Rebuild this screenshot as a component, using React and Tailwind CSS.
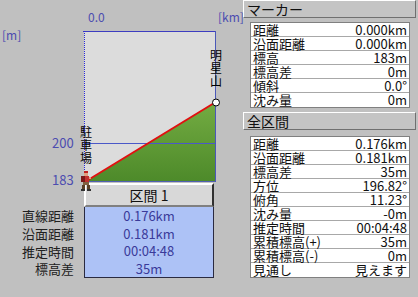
import React from 'react';

const MARKER_ROWS = [
    ['距離', '0.000km'],
    ['沿面距離', '0.000km'],
    ['標高', '183m'],
    ['標高差', '0m'],
    ['傾斜', '0.0°'],
    ['沈み量', '0m'],
];

const TOTAL_ROWS = [
    ['距離', '0.176km'],
    ['沿面距離', '0.181km'],
    ['標高差', '35m'],
    ['方位', '196.82°'],
    ['俯角', '11.23°'],
    ['沈み量', '-0m'],
    ['推定時間', '00:04:48'],
    ['累積標高(+)', '35m'],
    ['累積標高(-)', '0m'],
    ['見通し', '見えます'],
];

const SECTION_ROWS = [
    ['直線距離', '0.176km'],
    ['沿面距離', '0.181km'],
    ['推定時間', '00:04:48'],
    ['標高差', '35m'],
];

function PanelHeader({ title }) {
    return (
        <div className="h-[18px] ml-[1px] mr-[2px] bg-[#c4c4c4] border border-t-white border-l-white border-r-[#707070] border-b-[#707070] pl-[3px] text-[14px] leading-[16px] text-[#101010]">
            {title}
        </div>
    );
}

function InfoTable({ rows }) {
    return (
        <div className="ml-[8px] w-[160px] bg-white border border-[#808080] flex flex-col divide-y divide-[#a8a8a8]">
            {rows.map(([label, value]) => (
                <div key={label} className="h-[14px] flex items-center justify-between px-[2px] text-[13px] leading-[14px] text-[#101010]">
                    <span>{label}</span>
                    <span>{value}</span>
                </div>
            ))}
        </div>
    );
}

function VerticalLabel({ chars, className }) {
    return (
        <div className={`absolute flex flex-col text-[12px] leading-[13px] text-black ${className}`}>
            {chars.map(c => (
                <span key={c} className="h-[13px]">{c}</span>
            ))}
        </div>
    );
}

function Hiker() {
    return (
        <svg width="14" height="20" viewBox="0 0 14 20" className="absolute left-[79px] top-[171px] z-10">
            <rect x="5" y="0" width="4" height="2" fill="#c02020" />
            <rect x="5" y="2" width="4" height="3" fill="#e0a080" />
            <rect x="2" y="5" width="5" height="6" fill="#7a1818" />
            <rect x="6" y="5" width="4" height="6" fill="#c03030" />
            <rect x="10" y="6" width="2" height="2" fill="#e0a080" />
            <rect x="4" y="11" width="6" height="3" fill="#806040" />
            <rect x="3" y="14" width="3" height="4" fill="#5a4028" />
            <rect x="8" y="14" width="3" height="4" fill="#5a4028" />
            <rect x="2" y="18" width="4" height="2" fill="#303030" />
            <rect x="8" y="18" width="4" height="2" fill="#303030" />
        </svg>
    );
}

export default function App() {
    return (
        <div className="w-[418px] h-[297px] bg-[#c0c0c0] flex overflow-hidden font-['Noto_Sans_CJK_JP','Noto_Sans',sans-serif]">
            {/* Profile chart */}
            <div className="w-[242px] relative">
                <div className="relative h-[183px]">
                    <svg width="242" height="183" className="absolute left-0 top-0">
                        <defs>
                            <linearGradient id="slope" x1="0" y1="0" x2="0" y2="1">
                                <stop offset="0" stopColor="#74ac42" />
                                <stop offset="1" stopColor="#4d8a2a" />
                            </linearGradient>
                        </defs>
                        <rect x="84" y="31" width="132" height="151" fill="#dcdcdc" />
                        <polygon points="87,181 216,102 216,181" fill="url(#slope)" />
                        <line x1="84" y1="143.5" x2="216" y2="143.5" stroke="#4a58c8" strokeWidth="1" />
                        <line x1="84" y1="181.5" x2="216" y2="181.5" stroke="#5060b0" strokeWidth="1" />
                        <line x1="83" y1="31.5" x2="216" y2="31.5" stroke="#3c3cc0" strokeWidth="1" />
                        <line x1="215.5" y1="31" x2="215.5" y2="182" stroke="#4a58b8" strokeWidth="1" />
                        <line x1="84.5" y1="31" x2="84.5" y2="182" stroke="#2828d8" strokeWidth="1" strokeDasharray="1 1" />
                        <line x1="88" y1="180" x2="215" y2="102.5" stroke="#e01010" strokeWidth="2" />
                        <circle cx="216" cy="102.5" r="3.5" fill="white" stroke="black" strokeWidth="1" />
                    </svg>

                    <span className="absolute left-[88px] top-[11px] text-[12px] leading-[12px] text-[#4c4cb0]">0.0</span>
                    <span className="absolute left-[218px] top-[11px] text-[12px] leading-[12px] text-[#4c4cb0]">[km]</span>
                    <span className="absolute left-[2px] top-[29px] text-[12px] leading-[12px] text-[#4c4cb0]">[m]</span>
                    <span className="absolute left-[52px] top-[136px] text-[13px] leading-[14px] text-[#4c4cb0]">200</span>
                    <span className="absolute left-[52px] top-[173px] text-[13px] leading-[14px] text-[#4c4cb0]">183</span>

                    <VerticalLabel chars={['駐', '車', '場']} className="left-[80px] top-[125px]" />
                    <VerticalLabel chars={['明', '星', '山']} className="left-[210px] top-[48px]" />
                </div>

                <Hiker />

                {/* Section summary */}
                <div className="flex">
                    <div className="w-[84px]" />
                    <div className="w-[130px] h-[24px] bg-[#d8d8d8] border-2 border-t-white border-l-white border-r-[#303030] border-b-[#808080] flex items-center justify-center text-[14px] text-[#101010]">
                        区間 1
                    </div>
                </div>
                <div className="flex">
                    <div className="w-[84px] pr-[10px] flex flex-col text-right text-[13px] text-[#202020]">
                        {SECTION_ROWS.map(([label]) => (
                            <div key={label} className="h-[17.75px] leading-[17.75px]">{label}</div>
                        ))}
                    </div>
                    <div className="w-[130px] h-[71px] bg-[#adc2f6] border border-t-0 border-[#2a2a40] flex flex-col text-[13px] text-[#3a3a9a]">
                        {SECTION_ROWS.map(([label, value]) => (
                            <div key={label} className="h-[17.5px] leading-[17.5px] text-center">{value}</div>
                        ))}
                    </div>
                </div>
            </div>

            {/* Info panel */}
            <div className="w-[176px] flex flex-col">
                <PanelHeader title="マーカー" />
                <div className="mt-[4px]">
                    <InfoTable rows={MARKER_ROWS} />
                </div>
                <div className="mt-[4px]">
                    <PanelHeader title="全区間" />
                </div>
                <div className="mt-[6px]">
                    <InfoTable rows={TOTAL_ROWS} />
                </div>
            </div>
        </div>
    );
}
